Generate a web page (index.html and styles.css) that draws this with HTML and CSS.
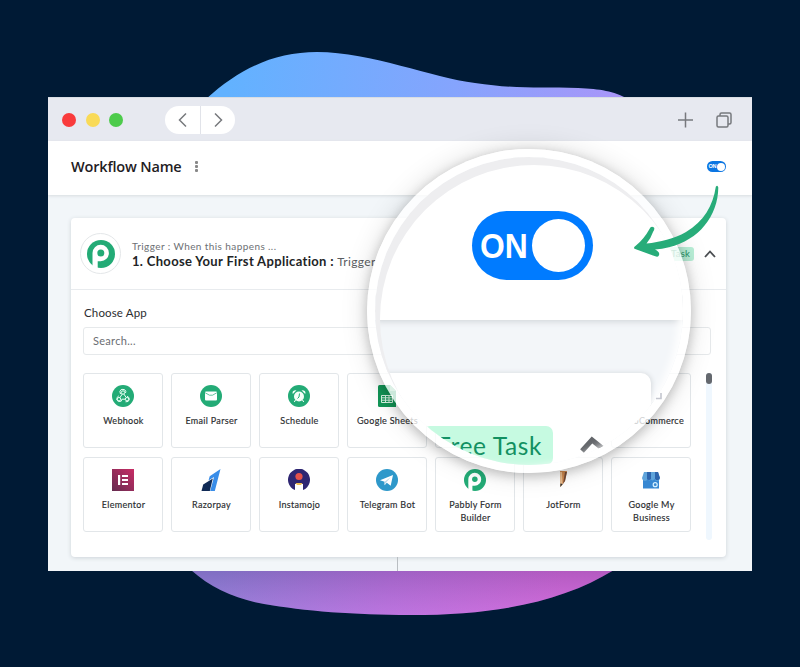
FILE: index.html
```html
<!DOCTYPE html>
<html lang="en">
<head>
<meta charset="utf-8">
<title>Workflow Name</title>
<link rel="stylesheet" href="styles.css">
</head>
<body>
<svg class="blob" viewBox="0 0 800 667" width="800" height="667">
  <defs>
    <linearGradient id="gt" gradientUnits="userSpaceOnUse" x1="230" y1="60" x2="640" y2="100"><stop offset="0" stop-color="#62b2ff"/><stop offset=".55" stop-color="#85a4fd"/><stop offset="1" stop-color="#ad94f8"/></linearGradient>
    <linearGradient id="gb" gradientUnits="userSpaceOnUse" x1="220" y1="570" x2="560" y2="610"><stop offset="0" stop-color="#8f85da"/><stop offset=".5" stop-color="#b575dc"/><stop offset="1" stop-color="#cf6cd8"/></linearGradient>
    <linearGradient id="shade" x1="0" y1="0" x2="0" y2="1"><stop offset="0" stop-color="#401060" stop-opacity=".2"/><stop offset="1" stop-color="#e070f0" stop-opacity=".15"/></linearGradient>
    <path id="low" d="M191 570C211 588 236 599 264 604C304 611 355 615 410 615C500 615 563 601 614 570Z"/>
  </defs>
  <path fill="url(#gt)" d="M206 99C240 68 275 52 317 52C372 52 432 78 475 83C514 89 540 87 578 88C601 89 613 91 628 99Z"/>
  <use href="#low" fill="url(#gb)"/><use href="#low" fill="url(#shade)"/>
</svg>
<main class="window">
  <div class="titlebar">
    <i class="dot red"></i><i class="dot yellow"></i><i class="dot green"></i>
    <div class="nav">
      <span><svg width="12" height="16" viewBox="0 0 12 16"><path d="M10 1.500 3.500 8 10 14.500"/></svg></span>
      <span><svg width="12" height="16" viewBox="0 0 12 16"><path d="M3 1.500 9.500 8 3 14.500"/></svg></span>
    </div>
    <div class="tools">
      <svg width="16" height="16" viewBox="0 0 16 16"><path d="M8.500 .5v15M1 8h15"/></svg>
      <svg width="16" height="16" viewBox="0 0 16 16"><rect x="1" y="4" width="11" height="11" rx="1.500"/><path d="M4 4V2.500Q4 1 5.500 1h8Q15 1 15 2.500v8Q15 12 13.500 12H12"/></svg>
    </div>
  </div>
  <header class="header">
    <h1>Workflow Name</h1>
    <span class="dots"><i></i><i></i><i></i></span>
    <span class="switch">ON<i></i></span>
  </header>
  <div class="canvas">
    <section class="card">
      <div class="cardhead">
        <div class="avatar"><svg width="28" height="28" viewBox="0 0 28 28"><use href="#pabbly"/></svg></div>
        <div class="titles">
          <p class="sub">Trigger : When this happens ...</p>
          <p class="main"><b>1. Choose Your First Application :</b> <span>Trigger</span></p>
        </div>
        <span class="badge">Free Task</span>
        <svg class="chev" width="12" height="8" viewBox="0 0 12 8"><path d="M1 7 6 1.500 11 7"/></svg>
      </div>
      <div class="cardbody">
        <div class="label">Choose App</div>
        <div class="search">Search...</div>
        <div class="apps">
          <div class="grid">
            <div class="tile"><svg viewBox="0 0 22 22"><circle cx="11" cy="11" r="11" fill="#23ab76"/><g fill="none" stroke="#e9fff5" stroke-width="1"><circle cx="11" cy="7.500" r="1.700"/><circle cx="7" cy="14.200" r="1.700"/><circle cx="15" cy="14.200" r="1.700"/><path d="M8.500 9Q7 5.800 9 4.700Q11 3.800 13 5Q14.400 6.300 13.500 8M10.300 9 7.800 12.800M6.800 10.800Q4.400 12 4.800 15Q6 17.500 9.200 16.200L9.900 14.200H13.300M11.800 9 14.200 12.500M15 11.300Q17.500 12 17.300 14.500Q16.800 17.300 13.500 16.800"/></g></svg><p>Webhook</p></div>
            <div class="tile"><svg viewBox="0 0 22 22"><circle cx="11" cy="11" r="11" fill="#23ab76"/><rect x="5" y="6.500" width="12" height="9" rx="1" fill="#fff"/><path d="M5.200 7.800 9.500 10.200H12.500L16.800 7.800" fill="none" stroke="#23ab76" stroke-width=".7"/></svg><p>Email Parser</p></div>
            <div class="tile"><svg viewBox="0 0 22 22"><circle cx="11" cy="11" r="11" fill="#23ab76"/><g fill="#f4fff9"><circle cx="11" cy="11.500" r="5"/><path d="M4.800 9Q3.500 5 8.500 5.200ZM17.200 9Q18.500 5 13.500 5.200Z"/></g><path d="M7.500 15 6.300 17M14.500 15 15.700 17" stroke="#fff"/><path d="M11.500 8.500 11 12 9.500 13.500" fill="none" stroke="#23ab76"/></svg><p>Schedule</p></div>
            <div class="tile"><svg viewBox="0 0 22 22"><path d="M3.500 0H14L20 6V22H3.500Q2 22 2 20.500V1.500Q2 0 3.500 0Z" fill="#129657"/><path d="M14 0 20 6H14Z" fill="#65bd91"/><path d="M5.500 10.500h11v7h-11zM5.500 12.800h11M5.500 15.200h11M9.500 10.500v7M13 10.500v7" fill="none" stroke="#d7f5e4"/></svg><p>Google Sheets</p></div>
            <div class="tile"><svg viewBox="0 0 22 22"></svg><p>Gmail</p></div>
            <div class="tile"><svg viewBox="0 0 22 22"></svg><p>Slack</p></div>
            <div class="tile"><svg viewBox="0 0 22 22"></svg><p>WooCommerce</p></div>
            <div class="tile"><svg viewBox="0 0 22 22"><defs><linearGradient id="el" x1="0" y1="1" x2="1" y2="0"><stop stop-color="#642c50"/><stop offset="1" stop-color="#c92c65"/></linearGradient></defs><path d="M0 0h22v22H0z" fill="url(#el)"/><path d="M6 6h2.200v10H6zM10 6h6v2.100h-6zM10 10h6v2h-6zM10 13.900h6V16h-6z" fill="#fff"/></svg><p>Elementor</p></div>
            <div class="tile"><svg viewBox="0 0 22 22"><path d="M20.500 0 14.800 22H10.200L14 8 8.500 11.500 9.700 7.200Z" fill="#398de8"/><path d="M3.200 15.500 12.800 9.500 9.800 22H1.500Z" fill="#102a55"/></svg><p>Razorpay</p></div>
            <div class="tile"><svg viewBox="0 0 22 22"><path d="M7 21A11 11 0 1 1 15 21V15H7Z" fill="#2e2672"/><path d="M7.500 15h6.500V22H7.500z" fill="#fff"/><circle cx="11" cy="7.500" r="3.600" fill="#e4514b"/><path d="M7.500 14h7L13 16H9Z" fill="#f1bd52"/></svg><p>Instamojo</p></div>
            <div class="tile"><svg viewBox="0 0 22 22"><circle cx="11" cy="11" r="11" fill="#2e98ca"/><path d="M4 11.200 17 6 14.700 16.800 10.800 13.700 8.600 16.200V12.800Z" fill="#fff"/><path d="M8.600 12.800 14.800 8 10.100 13.500 8.600 16.200Z" fill="#bdd9e8"/></svg><p>Telegram Bot</p></div>
            <div class="tile"><svg viewBox="0 0 28 28"><g id="pabbly"><circle cx="14" cy="14" r="14" fill="#23ab76"/><path d="M5.500 28V13A8.200 8.200 0 1 1 13.700 21.200H10.700V28Z" fill="#fff"/><circle cx="13.800" cy="13" r="3.500" fill="#23ab76"/></g></svg><p>Pabbly Form<br>Builder</p></div>
            <div class="tile"><svg viewBox="0 0 22 22"><path d="M8 2H15L13 12 8.500 18Z" fill="#cf884e"/><path d="M8 3H10L10.500 15 8.500 18Z" fill="#e9bf92"/><path d="M13 3H15L13 12 11 15Z" fill="#714a37"/><path d="M8.500 14.500 10.800 15 8.200 18Z" fill="#333"/></svg><p>JotForm</p></div>
            <div class="tile"><svg viewBox="0 0 22 22"><path d="M3 9h16v10.500H3z" fill="#3888d2"/><path d="M4 3H18L20 9Q19.500 12 17 12Q15 12 14.500 10Q13 12.500 11 10.500Q9 12.500 7.500 10Q7 12 5 12Q2.500 12 2 9Z" fill="#5fa4db"/><path d="M7 3h4v7Q9 12 7 10ZM15 3h3l2 6q-2 4-5 1Z" fill="#2e65ad"/><circle cx="15.200" cy="15.700" r="2" fill="none" stroke="#d8f2ff" stroke-width="1.200"/></svg><p>Google My<br>Business</p></div>
          </div>
          <div class="scroll"><i></i></div>
        </div>
      </div>
    </section>
    <div class="connector"></div>
  </div>
</main>
<div class="lens">
  <div class="glass">
    <div class="ztop"><div class="zswitch"><span>ON</span><i></i></div></div>
    <div class="zcard">
      <span class="zbadge">Free Task</span>
      <svg class="zchev" width="26" height="20" viewBox="0 0 26 20"><path d="M3 17 13 6 23 14"/></svg>
    </div>
  </div>
  <svg class="corner" width="8" height="8" viewBox="0 0 8 8"><path d="M1 6.500h5V1" fill="none" stroke="#c4c6cf" stroke-width="1.600"/></svg>
</div>
<svg class="arrow" width="90" height="76" viewBox="630 184 90 76"><path fill="#27ac79" d="M715.800 186.800Q717.500 184.500 718.300 187.500C718 216 699 240 669 247.200Q662 249 655 249.500Q661 252.500 658.500 256Q657.500 257.500 653 255.500L634.500 248.800Q633 247.300 636 245.500Q644 239 649.500 229Q651 225.500 654 227.500Q655 229 653 232Q651 238 646.500 243.600C660 242 674 239 686 232C704 221 713 206 715.800 186.800Z"/></svg>
</body>
</html>
```
FILE: styles.css
```css
* { box-sizing: border-box; }
body { margin: 0; width: 800px; height: 667px; overflow: hidden; background: #001a35; padding: 97px 48px; font-family: Lato, "Open Sans", sans-serif; color: #2b2d30; position: relative; }
p, h1 { margin: 0; }
.blob { position: absolute; inset: 0; }
.window { position: relative; width: 704px; height: 474px; background: #f2f6f9; display: flex; flex-direction: column; overflow: hidden; border-top: 1px solid #d8dde3; }
.titlebar { height: 43px; flex: none; background: #e7e9f0; display: flex; align-items: center; padding: 0 20px 0 14px; }
.dot { width: 14px; height: 14px; border-radius: 50%; margin-right: 9.700px; }
.red { background: #f93b3c; }
.yellow { background: #f9da57; }
.green { background: #4dcb4b; }
.nav { display: flex; margin-left: 32px; width: 70px; height: 28px; border-radius: 14px; overflow: hidden; background: #fff; }
.nav span { flex: 1; display: flex; align-items: center; justify-content: center; }
.nav span + span { border-left: 1px solid #e1e3e9; }
.titlebar svg { fill: none; stroke: #77797d; stroke-width: 1.500; }
.tools { margin-left: auto; display: flex; gap: 23px; }
.header { height: 54px; flex: none; background: #fff; display: flex; align-items: center; padding: 0 26px 3px 23px; box-shadow: 0 1px 3px #d7dcdf; position: relative; }
h1 { font: 600 14.500px/20px "Open Sans", sans-serif; width: 111px; letter-spacing: -.18px; white-space: nowrap; color: #1f2023; }
.dots { margin-left: 13px; display: flex; flex-direction: column; gap: 1.500px; }
.dots i { width: 2.500px; height: 2.500px; background: #888; border-radius: 1px; }
.switch { margin-left: auto; width: 19px; height: 11px; border-radius: 6px; background: #0b75e2; color: #fff; font: bold 5.500px/11px "Liberation Sans", sans-serif; padding: 0 1.500px; display: flex; align-items: center; justify-content: space-between; letter-spacing: -.4px; }
.switch i { width: 8px; height: 8px; border-radius: 50%; background: #fff; flex: none; }
.canvas { padding: 23px 26px 0 23px; display: flex; flex-direction: column; align-items: center; }
.card { width: 655px; height: 339px; background: #fff; border-radius: 4px; box-shadow: 0 1px 4px #cdd3d8; flex: none; }
.cardhead { height: 72px; border-bottom: 1px solid #e8ebee; display: flex; align-items: center; padding: 0 10px 0 9px; }
.avatar { width: 41px; height: 41px; border: 1px solid #e4e7e9; border-radius: 50%; display: flex; align-items: center; justify-content: center; }
.titles { margin-left: 11px; white-space: nowrap; padding-top: 2px; }
.sub { font-size: 10px; line-height: 13px; color: #6d7074; letter-spacing: .41px; }
.main { font-size: 13px; line-height: 17px; color: #222426; }
.main b { letter-spacing: .33px; }
.main span { font-size: 12px; color: #5a5d61; letter-spacing: .33px; }
.badge { margin-left: auto; padding: 0 4px; border-radius: 3px; background: #b9efd7; color: #279568; font-size: 9.500px; line-height: 14px; letter-spacing: .2px; }
.chev { margin: 0 0 0 10px; fill: none; stroke: #4b4e52; stroke-width: 1.800; }
.cardbody { padding: 15px 15px 0 12px; }
.label { font-size: 11.500px; line-height: 16px; letter-spacing: .15px; padding-left: 1px; }
.search { margin-top: 6px; height: 28px; border: 1px solid #e6e9eb; border-radius: 3px; padding-left: 9px; font-size: 11px; line-height: 26px; letter-spacing: .3px; color: #6b6e72; }
.apps { display: flex; margin-top: 18px; }
.grid { display: grid; grid-template-columns: repeat(7, 80px); grid-auto-rows: 75px; gap: 9px 8px; }
.tile { border: 1px solid #e2e6e9; border-radius: 3px; display: flex; flex-direction: column; align-items: center; padding-top: 11px; text-align: center; }
.tile svg { width: 22px; height: 22px; flex: none; }
.tile p { margin-top: 7px; font-size: 9px; line-height: 13px; letter-spacing: .3px; white-space: nowrap; padding-left: 1px; -webkit-text-stroke: .15px #2b2d30; }
.scroll { width: 6px; height: 167px; border-radius: 3px; background: #eff7fe; margin-left: 15px; }
.scroll i { display: block; width: 6px; height: 11px; border-radius: 3px; background: #64686e; }
.connector { width: 1px; height: 14px; background: #b9bec2; margin-right: 3px; }
.lens { position: absolute; left: 367px; top: 149px; width: 324px; height: 324px; border-radius: 50%; background: #ffffffc8; padding: 8px; box-shadow: 0 3px 12px #00000038, 0 0 28px #00000022; }
.glass { position: relative; width: 308px; height: 308px; border-radius: 50%; overflow: hidden; background: #f3f6f9; }
.glass::after { content: ""; position: absolute; inset: 0; border-radius: 50%; box-shadow: inset 5px 8px 0 #eeeef0, inset -7px 0 9px -3px #fff; }
.ztop { height: 163px; background: #fff; padding: 54px 0 0 97px; box-shadow: 0 1px 7px #ccd0d4; }
.zswitch { width: 121px; height: 69px; border-radius: 35px; background: #007bff; color: #fff; padding: 0 8px; display: flex; align-items: center; justify-content: space-between; }
.zswitch span { font: bold 35px/69px "Liberation Sans", sans-serif; letter-spacing: 0; display: block; width: 48px; transform: scaleX(.91); transform-origin: left; }
.zswitch i { width: 53px; height: 53px; border-radius: 50%; background: #fff; flex: none; }
.zcard { margin-top: 53px; width: 276px; height: 120px; background: #fff; border-radius: 0 10px 0 0; box-shadow: 1px 0 5px #d5d9dd; display: flex; align-items: flex-start; padding: 53px 0 0 48px; }
.zbadge { width: 130px; height: 39px; border-radius: 7px; background: #c6fae1; color: #129061; font-size: 24.500px; line-height: 39px; text-align: right; padding-right: 11px; letter-spacing: .6px; white-space: nowrap; flex: none; }
.zchev { margin: 8px 0 0 26px; fill: none; stroke: #63666a; stroke-width: 5; flex: none; }
.corner { position: absolute; left: 288px; top: 243px; }
.arrow { position: absolute; left: 630px; top: 184px; }
```
